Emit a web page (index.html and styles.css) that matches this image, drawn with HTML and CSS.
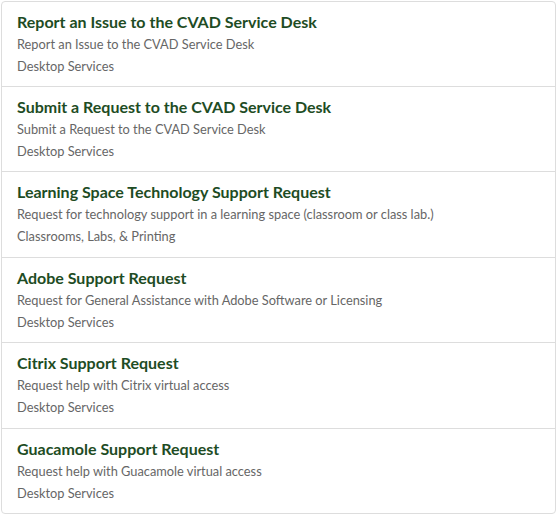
FILE: index.html
```html
<!DOCTYPE html>
<html>
<head>
<meta charset="utf-8">
<link rel="stylesheet" href="styles.css">
</head>
<body>
<div class="list">
  <div class="item">
    <div class="title">Report an Issue to the CVAD Service Desk</div>
    <div class="desc">Report an Issue to the CVAD Service Desk</div>
    <div class="cat">Desktop Services</div>
  </div>
  <div class="item">
    <div class="title">Submit a Request to the CVAD Service Desk</div>
    <div class="desc">Submit a Request to the CVAD Service Desk</div>
    <div class="cat">Desktop Services</div>
  </div>
  <div class="item">
    <div class="title">Learning Space Technology Support Request</div>
    <div class="desc">Request for technology support in a learning space (classroom or class lab.)</div>
    <div class="cat">Classrooms, Labs, &amp; Printing</div>
  </div>
  <div class="item">
    <div class="title">Adobe Support Request</div>
    <div class="desc">Request for General Assistance with Adobe Software or Licensing</div>
    <div class="cat">Desktop Services</div>
  </div>
  <div class="item">
    <div class="title">Citrix Support Request</div>
    <div class="desc">Request help with Citrix virtual access</div>
    <div class="cat">Desktop Services</div>
  </div>
  <div class="item">
    <div class="title">Guacamole Support Request</div>
    <div class="desc">Request help with Guacamole virtual access</div>
    <div class="cat">Desktop Services</div>
  </div>
</div>
</body>
</html>
```
FILE: styles.css
```css
html, body {
  margin: 0;
  padding: 0;
  background: #fff;
}
body {
  padding: 1px;
  font-family: "Lato", "Open Sans", sans-serif;
}
.list {
  width: 553px;
  border: 1px solid #ddd;
  border-radius: 4px;
}
.item {
  padding: 9px 15px 9.4px 15px;
  border-top: 1px solid #ddd;
}
.item:first-child {
  border-top: none;
  padding-bottom: 9px;
}
.title {
  font-size: 16px;
  font-weight: 700;
  line-height: 22px;
  color: #1e4c24;
}
.desc, .cat {
  font-size: 12.8px;
  line-height: 22px;
  color: #666;
}
```
